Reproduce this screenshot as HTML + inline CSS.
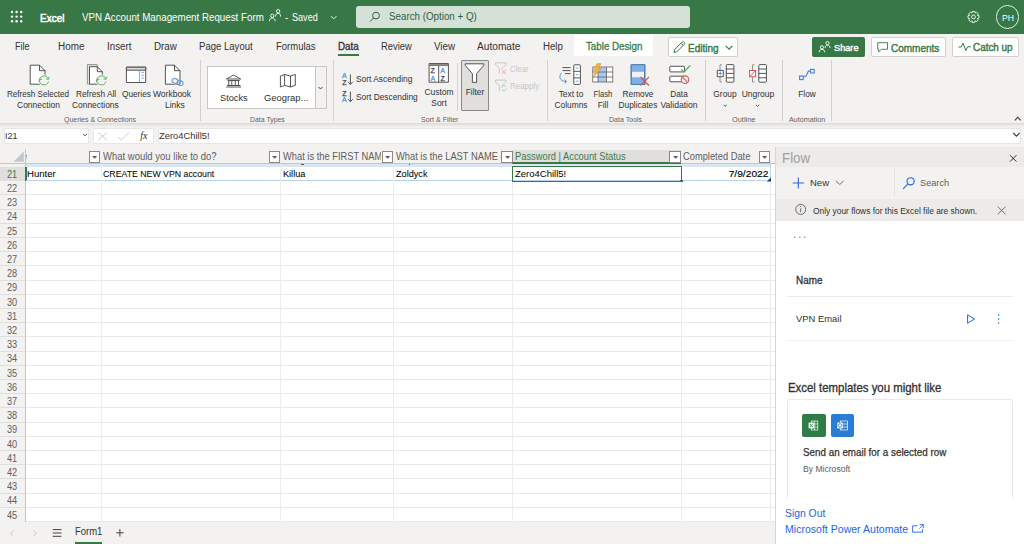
<!DOCTYPE html>
<html><head><meta charset="utf-8">
<style>
*{box-sizing:border-box;margin:0;padding:0}
html,body{width:1024px;height:544px;overflow:hidden;background:#fff;font-family:"Liberation Sans",sans-serif;color:#323130}
.a{position:absolute}
.t{position:absolute;white-space:nowrap;line-height:0}
.c{transform:translateX(-50%)}
svg{position:absolute;overflow:visible}
</style></head><body>
<!-- title bar -->
<div class="a" style="left:0;top:0;width:1024px;height:34px;background:#377846"></div>
<!-- tab bar + ribbon -->
<div class="a" style="left:0;top:34px;width:1024px;height:90px;background:#f3f2f1"></div>
<!-- formula bar -->
<div class="a" style="left:0;top:124px;width:1024px;height:25px;background:#f3f2f1"></div>
<!-- grid -->
<div class="a" id="grid" style="left:0;top:149px;width:776px;height:373px;background:#fff"></div>
<!-- sheet tabs -->
<div class="a" style="left:0;top:522px;width:776px;height:22px;background:#f3f2f1"></div>
<!-- TITLE BAR CONTENT -->
<svg style="left:0;top:0" width="40" height="34">
<g fill="#fff"><circle cx="12" cy="12" r="1.2"/><circle cx="16.6" cy="12" r="1.2"/><circle cx="21.2" cy="12" r="1.2"/>
<circle cx="12" cy="16.6" r="1.2"/><circle cx="16.6" cy="16.6" r="1.2"/><circle cx="21.2" cy="16.6" r="1.2"/>
<circle cx="12" cy="21.2" r="1.2"/><circle cx="16.6" cy="21.2" r="1.2"/><circle cx="21.2" cy="21.2" r="1.2"/></g></svg>
<div class="t" style="left:40.4px;top:17.6px;font-size:10.9px;color:#fff;-webkit-text-stroke:0.5px #fff;transform-origin:0 0;transform:scaleX(0.92)">Excel</div>
<div class="t" style="left:82px;top:17.6px;font-size:10.26px;color:#fff;transform-origin:0 0;transform:scaleX(0.9524)">VPN Account Management Request Form</div>
<svg style="left:0;top:0" width="300" height="34"><g fill="none" stroke="#fff" stroke-width="0.9"><circle cx="272.3" cy="15.8" r="1.7"/><path d="M269.4 21.2 C269.4 19 270.6 18 272.3 18 C274 18 275.2 19 275.2 21.2"/><circle cx="278.1" cy="11.2" r="1.7"/><path d="M275.6 16.6 C275.6 14.4 276.6 13.4 278.1 13.4 C279.6 13.4 280.7 14.4 280.7 16.6"/></g></svg>
<div class="t" style="left:284.5px;top:17.6px;font-size:10.26px;color:#fff;transform-origin:0 0;transform:scaleX(0.9524)">-</div>
<div class="t" style="left:291.5px;top:17.6px;font-size:10.24px;color:#fff;transform-origin:0 0;transform:scaleX(0.8886)">Saved</div>
<svg style="left:330px;top:15px" width="8" height="6"><path d="M1 1.2 L3.7 3.9 L6.4 1.2" fill="none" stroke="#fff" stroke-width="0.9"/></svg>
<div class="a" style="left:356.4px;top:6.1px;width:333.2px;height:22.1px;background:#d5e1d7;border-radius:3px"></div>
<svg style="left:369px;top:11px" width="12" height="12"><g fill="none" stroke="#2f5f3c" stroke-width="1"><circle cx="7" cy="4.6" r="3.4"/><path d="M4.6 7 L1 10.6"/></g></svg>
<div class="t" style="left:388.5px;top:17.3px;font-size:10.28px;color:#2f5f3c;transform-origin:0 0;transform:scaleX(0.9524)">Search (Option + Q)</div>
<svg style="left:0;top:0" width="1024" height="34"><g fill="none" stroke="#fff" stroke-width="0.9" stroke-linejoin="round"><circle cx="973.5" cy="16.9" r="1.9"/><path d="M978.97 15.68 L978.97 18.12 L977.38 18.51 L977.38 18.51 L978.23 19.90 L976.50 21.63 L975.11 20.78 L975.11 20.78 L974.72 22.37 L972.28 22.37 L971.89 20.78 L971.89 20.78 L970.50 21.63 L968.77 19.90 L969.62 18.51 L969.62 18.51 L968.03 18.12 L968.03 15.68 L969.62 15.29 L969.62 15.29 L968.77 13.90 L970.50 12.17 L971.89 13.02 L971.89 13.02 L972.28 11.43 L974.72 11.43 L975.11 13.02 L975.11 13.02 L976.50 12.17 L978.23 13.90 L977.38 15.29 L977.38 15.29 Z"/></g></svg>
<div class="a" style="left:995.9px;top:5.3px;width:23.3px;height:23.3px;border:0.9px solid #e8efe9;border-radius:50%"></div>
<div class="t" style="left:1001.9px;top:17.5px;font-size:9.4px;color:#fff;transform-origin:0 0;transform:scaleX(0.92)">PH</div>
<!-- TABS -->
<div class="t" style="left:15.4px;top:46.7px;font-size:10.24px;transform-origin:0 0;transform:scaleX(0.8849)">File</div>
<div class="t" style="left:58px;top:46.7px;font-size:10.24px;transform-origin:0 0;transform:scaleX(0.9666)">Home</div>
<div class="t" style="left:106.6px;top:46.7px;font-size:10.24px;transform-origin:0 0;transform:scaleX(0.9528)">Insert</div>
<div class="t" style="left:153.8px;top:46.7px;font-size:10.24px;transform-origin:0 0;transform:scaleX(0.9584)">Draw</div>
<div class="t" style="left:199.2px;top:46.7px;font-size:10.24px;transform-origin:0 0;transform:scaleX(0.9339)">Page Layout</div>
<div class="t" style="left:275.5px;top:46.7px;font-size:10.24px;transform-origin:0 0;transform:scaleX(0.9280)">Formulas</div>
<div class="t" style="left:338px;top:46.7px;font-size:10.34px;-webkit-text-stroke:0.3px #323130;transform-origin:0 0;transform:scaleX(0.9524)">Data</div>
<div class="a" style="left:338px;top:54px;width:21px;height:2px;background:#377846"></div>
<div class="t" style="left:380.6px;top:46.7px;font-size:10.24px;transform-origin:0 0;transform:scaleX(0.9144)">Review</div>
<div class="t" style="left:433.7px;top:46.7px;font-size:10.24px;transform-origin:0 0;transform:scaleX(0.9541)">View</div>
<div class="t" style="left:477px;top:46.7px;font-size:10.24px;transform-origin:0 0;transform:scaleX(0.9925)">Automate</div>
<div class="t" style="left:543.2px;top:46.7px;font-size:10.24px;transform-origin:0 0;transform:scaleX(0.9450)">Help</div>
<div class="a" style="left:574.4px;top:34.4px;width:79px;height:21.6px;background:#fff"></div>
<div class="t" style="left:585.8px;top:46.7px;font-size:10.24px;color:#3a7d4b;-webkit-text-stroke:0.3px #3a7d4b;transform-origin:0 0;transform:scaleX(0.9524)">Table Design</div>
<!-- Editing -->
<div class="a" style="left:668px;top:37.3px;width:69.7px;height:19.6px;background:#fff;border:1px solid #d2d0ce;border-radius:2px"></div>
<svg style="left:672px;top:40px" width="14" height="14"><g fill="none" stroke="#377846" stroke-width="1"><path d="M2 12.5 L2.6 9.6 L10 2.2 C10.6 1.6 11.6 1.6 12.2 2.2 C12.8 2.8 12.8 3.8 12.2 4.4 L4.8 11.8 Z M9 3.2 L11.2 5.4"/></g></svg>
<div class="t" style="left:688.4px;top:47.6px;font-size:10.50px;color:#377846;-webkit-text-stroke:0.4px #377846;transform-origin:0 0;transform:scaleX(0.9524)">Editing</div>
<svg style="left:724.5px;top:44.6px" width="9" height="6"><path d="M0.8 0.9 L4.1 4.2 L7.4 0.9" fill="none" stroke="#377846" stroke-width="1.1"/></svg>
<!-- Share -->
<div class="a" style="left:812.2px;top:37px;width:52.9px;height:19.9px;background:#377846;border-radius:2px"></div>
<svg style="left:0;top:0" width="1024" height="60"><g fill="none" stroke="#fff" stroke-width="0.9"><circle cx="821.9" cy="47.3" r="1.6"/><path d="M819.1 52.3 C819.1 50.3 820.3 49.4 821.9 49.4 C823.5 49.4 824.7 50.3 824.7 52.3"/><circle cx="827.5" cy="43.1" r="1.6"/><path d="M825.1 48.1 C825.1 46.1 826.1 45.2 827.5 45.2 C828.9 45.2 830 46.1 830 48.1"/></g></svg>
<div class="t" style="left:833.5px;top:47.6px;font-size:9.66px;color:#fff;-webkit-text-stroke:0.4px #fff;transform-origin:0 0;transform:scaleX(0.9524)">Share</div>
<!-- Comments -->
<div class="a" style="left:870.8px;top:37.3px;width:75.7px;height:19.6px;background:#fff;border:1px solid #d2d0ce;border-radius:2px"></div>
<svg style="left:877px;top:42px" width="12" height="11"><path d="M0.7 0.7 H10.5 V7.3 H4.3 L1.6 9.8 V7.3 H0.7 Z" fill="none" stroke="#377846" stroke-width="0.9"/></svg>
<div class="t" style="left:891px;top:47.6px;font-size:10.50px;color:#377846;-webkit-text-stroke:0.4px #377846;transform-origin:0 0;transform:scaleX(0.9524)">Comments</div>
<!-- Catch up -->
<div class="a" style="left:952.2px;top:37.3px;width:67px;height:19.6px;background:#fff;border:1px solid #d2d0ce;border-radius:2px"></div>
<svg style="left:957.5px;top:42px" width="14" height="10"><path d="M0.5 5 L3.2 5 L5 1.2 L7.8 8.6 L9.6 4.8 L13 4.8" fill="none" stroke="#377846" stroke-width="1"/></svg>
<div class="t" style="left:972.8px;top:47.6px;font-size:10.40px;color:#377846;-webkit-text-stroke:0.4px #377846;transform-origin:0 0;transform:scaleX(0.9524)">Catch up</div>

<!-- RIBBON -->
<div class="a" style="left:0;top:123px;width:1024px;height:4px;background:linear-gradient(#dcdad8,#f3f2f1)"></div>
<!-- separators -->
<div class="a" style="left:200px;top:60px;width:1px;height:61px;background:#d2d0ce"></div>
<div class="a" style="left:333px;top:60px;width:1px;height:61px;background:#d2d0ce"></div>
<div class="a" style="left:546.5px;top:60px;width:1px;height:61px;background:#d2d0ce"></div>
<div class="a" style="left:457.3px;top:63px;width:1px;height:48px;background:#d2d0ce"></div>
<div class="a" style="left:705.3px;top:60px;width:1px;height:61px;background:#d2d0ce"></div>
<div class="a" style="left:782.2px;top:60px;width:1px;height:61px;background:#d2d0ce"></div>
<div class="a" style="left:831.4px;top:60px;width:1px;height:61px;background:#d2d0ce"></div>
<!-- labels -->
<div class="t" style="left:7.3px;top:94px;font-size:8.51px;transform-origin:0 0;transform:scaleX(0.9524)">Refresh Selected</div>
<div class="t" style="left:16.6px;top:105px;font-size:8.93px;transform-origin:0 0;transform:scaleX(0.9524)">Connection</div>
<div class="t" style="left:75.7px;top:94px;font-size:8.72px;transform-origin:0 0;transform:scaleX(0.9524)">Refresh All</div>
<div class="t" style="left:71.7px;top:105px;font-size:8.82px;transform-origin:0 0;transform:scaleX(0.9524)">Connections</div>
<div class="t" style="left:121.5px;top:94px;font-size:8.66px;transform-origin:0 0;transform:scaleX(0.9524)">Queries</div>
<div class="t" style="left:153.4px;top:94px;font-size:8.93px;transform-origin:0 0;transform:scaleX(0.9524)">Workbook</div>
<div class="t" style="left:165px;top:105px;font-size:8.93px;transform-origin:0 0;transform:scaleX(0.9524)">Links</div>
<div class="t" style="left:64px;top:119.8px;font-size:7.35px;color:#605e5c;transform-origin:0 0;transform:scaleX(0.9524)">Queries &amp; Connections</div>
<div class="a" style="left:206.5px;top:65.6px;width:120.3px;height:43.6px;background:#fff;border:1px solid #c8c6c4"></div>
<div class="a" style="left:314.8px;top:66.6px;width:11px;height:41.6px;background:#f3f2f1;border-left:1px solid #c8c6c4"></div>
<svg style="left:317px;top:86px" width="8" height="5"><path d="M1.5 1 L3.5 3 L5.5 1" fill="none" stroke="#323130" stroke-width="0.9"/></svg>
<div class="t" style="left:219.8px;top:97.6px;font-size:9.66px;transform-origin:0 0;transform:scaleX(0.9524)">Stocks</div>
<div class="t" style="left:264px;top:97.6px;font-size:9.87px;transform-origin:0 0;transform:scaleX(0.9524)">Geograp...</div>
<div class="t" style="left:249.7px;top:119.8px;font-size:7.25px;color:#605e5c;transform-origin:0 0;transform:scaleX(0.9524)">Data Types</div>
<div class="t" style="left:356.3px;top:79.3px;font-size:8.82px;transform-origin:0 0;transform:scaleX(0.9524)">Sort Ascending</div>
<div class="t" style="left:356.3px;top:96.6px;font-size:8.77px;transform-origin:0 0;transform:scaleX(0.9524)">Sort Descending</div>
<div class="t c" style="left:438.5px;top:91.6px;font-size:8.87px;transform-origin:50% 0;transform:translateX(-50%) scaleX(0.9524)">Custom</div>
<div class="t c" style="left:438.5px;top:102.8px;font-size:8.87px;transform-origin:50% 0;transform:translateX(-50%) scaleX(0.9524)">Sort</div>
<div class="a" style="left:460.8px;top:60px;width:28.5px;height:50.5px;background:#e1dfdd;border:1px solid #8a8886;border-radius:1px"></div>
<div class="t c" style="left:475.1px;top:91.6px;font-size:8.72px;transform-origin:50% 0;transform:translateX(-50%) scaleX(0.9524)">Filter</div>
<div class="t" style="left:509.7px;top:69.8px;font-size:8.19px;color:#c8c6c4;transform-origin:0 0;transform:scaleX(0.9524)">Clear</div>
<div class="t" style="left:509.7px;top:86px;font-size:8.35px;color:#c8c6c4;transform-origin:0 0;transform:scaleX(0.9524)">Reapply</div>
<div class="t" style="left:421px;top:119.8px;font-size:7.46px;color:#605e5c;transform-origin:0 0;transform:scaleX(0.9524)">Sort &amp; Filter</div>
<div class="t c" style="left:570.5px;top:93.9px;font-size:8.82px;transform-origin:50% 0;transform:translateX(-50%) scaleX(0.9524)">Text to</div>
<div class="t c" style="left:570.5px;top:104.8px;font-size:8.77px;transform-origin:50% 0;transform:translateX(-50%) scaleX(0.9524)">Columns</div>
<div class="t c" style="left:602.5px;top:93.9px;font-size:8.72px;transform-origin:50% 0;transform:translateX(-50%) scaleX(0.88)">Flash</div>
<div class="t c" style="left:602.7px;top:104.8px;font-size:8.72px;transform-origin:50% 0;transform:translateX(-50%) scaleX(0.9524)">Fill</div>
<div class="t c" style="left:637.8px;top:93.9px;font-size:8.72px;transform-origin:50% 0;transform:translateX(-50%) scaleX(0.9524)">Remove</div>
<div class="t c" style="left:637.8px;top:104.8px;font-size:8.72px;transform-origin:50% 0;transform:translateX(-50%) scaleX(0.9524)">Duplicates</div>
<div class="t c" style="left:679px;top:93.9px;font-size:8.72px;transform-origin:50% 0;transform:translateX(-50%) scaleX(0.9524)">Data</div>
<div class="t c" style="left:679.2px;top:104.8px;font-size:9.03px;transform-origin:50% 0;transform:translateX(-50%) scaleX(0.9524)">Validation</div>
<div class="t" style="left:609.4px;top:119.8px;font-size:7.40px;color:#605e5c;transform-origin:0 0;transform:scaleX(0.9524)">Data Tools</div>
<div class="t c" style="left:725.2px;top:94.2px;font-size:8.82px;transform-origin:50% 0;transform:translateX(-50%) scaleX(0.9524)">Group</div>
<div class="t c" style="left:758px;top:94.2px;font-size:8.93px;transform-origin:50% 0;transform:translateX(-50%) scaleX(0.9524)">Ungroup</div>
<div class="t" style="left:731.9px;top:119.8px;font-size:7.77px;color:#605e5c;transform-origin:0 0;transform:scaleX(0.9524)">Outline</div>
<div class="t c" style="left:806.6px;top:94px;font-size:8.77px;transform-origin:50% 0;transform:translateX(-50%) scaleX(0.9524)">Flow</div>
<div class="t" style="left:788.5px;top:119.8px;font-size:7.56px;color:#605e5c;transform-origin:0 0;transform:scaleX(0.9524)">Automation</div>
<svg style="left:0;top:0" width="1024" height="130">
<g fill="none" stroke="#424242" stroke-width="0.9" stroke-linejoin="round">
<!-- refresh selected doc -->
<path d="M30.2 65.2 H39.5 L45 70.7 V84.2 H30.2 Z M39.5 65.2 V70.7 H45" fill="#fff"/>
<!-- refresh all docs -->
<path d="M87.4 84 V64.6 H97.2 V66.5 M87.4 84 H89.3" fill="#e6e4e2" stroke="#8a8886"/>
<path d="M89.5 66.7 H97.3 L102.3 71.7 V84.2 H89.5 Z M97.3 66.7 V71.7 H102.3" fill="#fff"/>
<!-- queries -->
<rect x="126.4" y="67.2" width="19.3" height="15.3" fill="#fff"/>
<rect x="126.4" y="67.2" width="19.3" height="3" fill="#dcdad8"/>
<!-- workbook links doc -->
<path d="M165.4 65.2 H174.5 L180 70.7 V84.2 H165.4 Z M174.5 65.2 V70.7 H180" fill="#fff"/>
<!-- stocks bank -->
<path d="M226.5 79 L233.6 75 L240.7 79 Z M227.5 80.5 H239.7 M226.3 87 H241 M228.8 81 V86 M231.8 81 V86 M235.3 81 V86 M238.4 81 V86 M227 85.5 H240.5"/>
<!-- map -->
<path d="M280.4 76 L284.6 74.5 L290.5 76 L295.3 74.5 V85.4 L290.5 87 L284.6 85.4 L280.4 87 Z M284.6 74.5 V85.4 M290.5 76 V87"/>
<!-- sort asc/desc arrows -->
<path d="M350.4 74.4 V84.3 M348 81.8 L350.4 84.4 L352.8 81.8"/>
<path d="M350.4 91.7 V101.6 M348 99.1 L350.4 101.7 L352.8 99.1"/>
<!-- custom sort -->
<rect x="429.1" y="63.5" width="19.3" height="18.7" fill="#fff"/>
<path d="M429.1 65.6 H448.4 M438.7 65.6 V82.2" />
<!-- funnel -->
<path d="M465.3 63.8 H483.8 V65.4 L476.6 73.8 V82.4 H472.4 V73.8 L465.3 65.4 Z" fill="#fff"/>
<!-- text to columns -->
<path d="M562.5 67.6 H570.5 M562.5 70.6 H570.5 M565 73.6 H570.5"/>
<rect x="573.8" y="64.8" width="6.6" height="19.6" rx="0.8" fill="#fff"/>
<path d="M573.8 71.3 H580.4 M573.8 77.9 H580.4"/>
<!-- flash fill table -->
<rect x="592.8" y="67" width="20" height="15" fill="#fff" stroke="none"/>
<!-- remove duplicates -->
<rect x="631.2" y="64.8" width="13.6" height="19.6"/>
<!-- data validation -->
<rect x="669.8" y="66.3" width="14.8" height="5.6" rx="0.8" fill="#fff"/>
<rect x="669.8" y="76.2" width="14.8" height="5.6" rx="0.8" fill="#fff"/>
<!-- group -->
<rect x="726.3" y="64.6" width="7.6" height="17.6" rx="0.8" fill="#fff"/>
<path d="M726.3 69 H733.9 M726.3 73.4 H733.9 M726.3 77.8 H733.9"/>
<path d="M722 64.8 H720 V82 H722" stroke="#8a8886"/>
<rect x="717.3" y="70.4" width="6" height="6.3" fill="#fff"/>
<!-- ungroup -->
<rect x="758.8" y="64.6" width="7.6" height="17.6" rx="0.8" fill="#fff"/>
<path d="M758.8 69 H766.4 M758.8 73.4 H766.4 M758.8 77.8 H766.4"/>
<path d="M754.5 64.8 H752.5 V70.2 M752.5 76.9 V82 H754.5" stroke="#8a8886"/>
</g>
<!-- gallery chevron in group/ungroup -->
<g fill="none" stroke="#424242" stroke-width="0.9"><path d="M723.6 104.8 L725.2 106.4 L726.8 104.8 M755.9 104.8 L757.5 106.4 L759.1 104.8"/></g>
<!-- green refresh circles -->
<g fill="none" stroke="#5cb85c" stroke-width="1">
<circle cx="44.1" cy="80.4" r="5.8" fill="#f3f2f1" stroke="none"/><path d="M39.66 81.59 A4.6 4.6 0 0 1 48.54 79.21 M48.54 81.59 A4.6 4.6 0 0 1 39.66 79.21 M46.14 78.91 L48.54 79.21 L49.04 76.81 M42.06 79.51 L39.66 79.21 L39.16 81.61"/>
<circle cx="101.5" cy="80.4" r="5.8" fill="#f3f2f1" stroke="none"/><path d="M97.06 81.59 A4.6 4.6 0 0 1 105.94 79.21 M105.94 81.59 A4.6 4.6 0 0 1 97.06 79.21 M103.54 78.91 L105.94 79.21 L106.44 76.81 M99.46 79.51 L97.06 79.21 L96.56 81.61"/>
</g>
<!-- queries blue pane -->
<path d="M139.4 70.6 V82.3 M141.2 72.4 H144.2 M141.2 75.2 H144.2 M141.2 78 H144.2" stroke="#5a9be0" stroke-width="0.8"/>
<!-- workbook links -->
<g fill="none" stroke="#5a9be0" stroke-width="1" transform="rotate(15 177.6 82)"><ellipse cx="175" cy="81.6" rx="3.2" ry="2.3" fill="#f3f2f1" stroke="#f3f2f1" stroke-width="2"/><ellipse cx="175" cy="81.6" rx="3.2" ry="2.3"/><ellipse cx="180.2" cy="82.4" rx="3.2" ry="2.3"/></g>
<!-- sort letters -->
<g font-family="Liberation Sans" font-size="7.1" stroke-width="0.25">
<text x="342" y="78.2" fill="#4a90d9" stroke="#4a90d9">A</text><text x="342.2" y="84.7" fill="#424242" stroke="#424242">Z</text>
<text x="342.2" y="95.8" fill="#424242" stroke="#424242">Z</text><text x="342" y="102.1" fill="#4a90d9" stroke="#4a90d9">A</text>
<text x="430.6" y="73.4" fill="#424242" stroke="#424242">Z</text><text x="430.4" y="81" fill="#4a90d9" stroke="#4a90d9">A</text>
<text x="440.2" y="73.4" fill="#4a90d9" stroke="#4a90d9">A</text><text x="440.4" y="81" fill="#424242" stroke="#424242">Z</text>
</g>
<rect x="429.5" y="63.9" width="18.5" height="1.9" fill="#8a8886"/>
<!-- clear / reapply -->
<g fill="none" stroke="#c4c2c0" stroke-width="0.9" stroke-linejoin="round"><path d="M495.4 62.8 H506 V64.4 L501.4 69 M495.4 62.8 V64.4 L499.4 68.6 V73.6"/><path d="M495.4 80.1 H506 V81.7 L501.4 86.3 M495.4 80.1 V81.7 L499.4 85.9 V90.9"/></g>
<path d="M501.6 69.6 L506 74 M506 69.6 L501.6 74" stroke="#eba3a3" stroke-width="0.9"/>
<path d="M501.6 87.6 A2.4 2.4 0 0 1 506 86.6 M506.2 88.6 A2.4 2.4 0 0 1 501.8 89.6" fill="none" stroke="#9fd09f" stroke-width="0.9"/>
<!-- text to columns arrow -->
<path d="M561.4 73.2 C558.5 76 559.5 81.5 566.5 81.6 M564.6 79.6 L566.7 81.6 L564.6 83.6" fill="none" stroke="#4a90d9" stroke-width="1"/>
<path d="M575.7 68 H578.5 M575.7 74.6 H578.5 M575.7 81.2 H578.5" stroke="#4a90d9" stroke-width="0.8"/>
<!-- flash fill -->
<rect x="598" y="67.4" width="8.5" height="14.4" fill="#a9c8ee"/>
<g fill="none" stroke="#605e5c" stroke-width="0.8"><path d="M592.8 72 H612.8 M592.8 77 H612.8 M598 67 V82 M606.5 67 V82"/><rect x="592.8" y="67" width="20" height="15"/></g>
<path d="M597 63.6 H601 L598.6 68.4 H601.2 L593.4 77 L595.8 70.6 H593.2 Z" fill="#f2b04b" stroke="#d98f1f" stroke-width="0.5"/>
<!-- remove duplicates -->
<rect x="631.2" y="64.8" width="13.6" height="7" fill="#7eb0e6"/>
<rect x="631.2" y="77.3" width="13.6" height="7" fill="#7eb0e6"/>
<rect x="631.2" y="64.8" width="13.6" height="19.6" fill="none" stroke="#4a7fbf" stroke-width="0.9"/>
<path d="M640.5 77 L649 85.5 M649 77 L640.5 85.5" stroke="#e05252" stroke-width="1.1"/>
<!-- data validation -->
<path d="M681.3 69.5 L684 72 L690.3 65.5" fill="none" stroke="#4caf50" stroke-width="1.1"/>
<circle cx="685" cy="79.7" r="3.8" fill="#f3f2f1" stroke="#e05252" stroke-width="1.1"/>
<path d="M682.4 77.1 L687.6 82.3" stroke="#e05252" stroke-width="1.1"/>
<!-- group plus / ungroup red -->
<path d="M720.3 71.5 V75.6 M718.3 73.5 H722.3" stroke="#4a90d9" stroke-width="0.9"/>
<rect x="749.6" y="70.5" width="6" height="6.3" fill="#fff" stroke="#e05252" stroke-width="1"/>
<path d="M750 76.4 L755.2 71" stroke="#e05252" stroke-width="1"/>
<!-- flow icon -->
<g fill="none" stroke="#4a7fe0" stroke-width="1.1"><rect x="799.6" y="76" width="3.6" height="3.6"/><rect x="810.6" y="69.4" width="3.6" height="3.6"/><path d="M803.2 77 L806 76 L808.5 71 L810.6 71.5"/></g>
<!-- collapse ribbon -->
<path d="M1014.8 120.3 L1017.8 117.3 L1020.8 120.3" fill="none" stroke="#424242" stroke-width="1.15"/>
</svg>

<!-- FORMULA BAR -->
<div class="a" style="left:3.6px;top:127.7px;width:85.8px;height:16.2px;background:#fff;border:1px solid #e8e6e4;border-radius:1px"></div>
<div class="t" style="left:5.3px;top:136.2px;font-size:9.35px;transform-origin:0 0;transform:scaleX(0.9524)">I21</div>
<svg style="left:82px;top:133px" width="8" height="5"><path d="M1.2 1 L3 2.8 L4.8 1" fill="none" stroke="#323130" stroke-width="0.9"/></svg>
<div class="a" style="left:92.8px;top:127.7px;width:61.4px;height:16.2px;background:#fff;border:1px solid #e8e6e4;border-radius:1px"></div>
<svg style="left:0;top:0" width="200" height="150"><path d="M98.2 132.4 L107 140.2 M107 132.4 L98.2 140.2 M117.8 136.8 L121.2 140 L129 132.4" fill="none" stroke="#c8c6c4" stroke-width="0.9"/></svg>
<div class="t" style="left:140.2px;top:135.8px;font-size:10px;font-family:'Liberation Serif',serif;font-style:italic;color:#323130">fx</div>
<div class="a" style="left:157.8px;top:127.7px;width:863.2px;height:16.2px;background:#fff;border:1px solid #e8e6e4;border-radius:1px"></div>
<div class="t" style="left:159.4px;top:135.8px;font-size:9.87px;transform-origin:0 0;transform:scaleX(0.9524)">Zero4Chill5!</div>
<svg style="left:1012px;top:131px" width="10" height="7"><path d="M1.2 2 L4.4 5.2 L7.6 2" fill="none" stroke="#424242" stroke-width="1.2"/></svg>
<!-- GRID -->
<div class="a" style="left:0;top:147px;width:776px;height:17px;background:#f3f2f1"></div>
<div class="a" style="left:0;top:163px;width:776px;height:1px;background:#c8c6c4"></div>
<div class="a" style="left:0;top:164px;width:25.3px;height:358px;background:#f3f2f1"></div>
<div class="a" style="left:25.2px;top:149px;width:1px;height:373px;background:#c8c6c4"></div>
<svg style="left:0;top:0" width="30" height="170"><path d="M23.8 151.4 V161.7 H13.5 Z" fill="#c8c6c4"/></svg>
<div class="a" style="left:26px;top:164px;width:745px;height:2.8px;background:#dbe6f3"></div>
<div class="a" style="left:0;top:166.6px;width:25.2px;height:14.4px;background:#e1dfdd"></div>
<div class="a" style="left:24.8px;top:166.6px;width:1.8px;height:14.4px;background:#377846"></div>
<div class="a" style="left:26px;top:180.10px;width:745px;height:0.9px;background:#b9d1ec"></div>
<div class="a" style="left:0;top:180.10px;width:25px;height:0.9px;background:#e1dfdd"></div>
<div class="t" style="left:7.1px;top:174.80px;font-size:10.2px;color:#377846;transform-origin:0 0;transform:scaleX(0.9)">21</div>
<div class="a" style="left:26px;top:194.30px;width:750px;height:0.9px;background:#e9e9e9"></div>
<div class="a" style="left:0;top:194.30px;width:25px;height:0.9px;background:#e1dfdd"></div>
<div class="t" style="left:7.1px;top:189.00px;font-size:10.2px;color:#605e5c;transform-origin:0 0;transform:scaleX(0.9)">22</div>
<div class="a" style="left:26px;top:208.50px;width:750px;height:0.9px;background:#e9e9e9"></div>
<div class="a" style="left:0;top:208.50px;width:25px;height:0.9px;background:#e1dfdd"></div>
<div class="t" style="left:7.1px;top:203.20px;font-size:10.2px;color:#605e5c;transform-origin:0 0;transform:scaleX(0.9)">23</div>
<div class="a" style="left:26px;top:222.70px;width:750px;height:0.9px;background:#e9e9e9"></div>
<div class="a" style="left:0;top:222.70px;width:25px;height:0.9px;background:#e1dfdd"></div>
<div class="t" style="left:7.1px;top:217.40px;font-size:10.2px;color:#605e5c;transform-origin:0 0;transform:scaleX(0.9)">24</div>
<div class="a" style="left:26px;top:236.90px;width:750px;height:0.9px;background:#e9e9e9"></div>
<div class="a" style="left:0;top:236.90px;width:25px;height:0.9px;background:#e1dfdd"></div>
<div class="t" style="left:7.1px;top:231.60px;font-size:10.2px;color:#605e5c;transform-origin:0 0;transform:scaleX(0.9)">25</div>
<div class="a" style="left:26px;top:251.10px;width:750px;height:0.9px;background:#e9e9e9"></div>
<div class="a" style="left:0;top:251.10px;width:25px;height:0.9px;background:#e1dfdd"></div>
<div class="t" style="left:7.1px;top:245.80px;font-size:10.2px;color:#605e5c;transform-origin:0 0;transform:scaleX(0.9)">26</div>
<div class="a" style="left:26px;top:265.30px;width:750px;height:0.9px;background:#e9e9e9"></div>
<div class="a" style="left:0;top:265.30px;width:25px;height:0.9px;background:#e1dfdd"></div>
<div class="t" style="left:7.1px;top:260.00px;font-size:10.2px;color:#605e5c;transform-origin:0 0;transform:scaleX(0.9)">27</div>
<div class="a" style="left:26px;top:279.50px;width:750px;height:0.9px;background:#e9e9e9"></div>
<div class="a" style="left:0;top:279.50px;width:25px;height:0.9px;background:#e1dfdd"></div>
<div class="t" style="left:7.1px;top:274.20px;font-size:10.2px;color:#605e5c;transform-origin:0 0;transform:scaleX(0.9)">28</div>
<div class="a" style="left:26px;top:293.70px;width:750px;height:0.9px;background:#e9e9e9"></div>
<div class="a" style="left:0;top:293.70px;width:25px;height:0.9px;background:#e1dfdd"></div>
<div class="t" style="left:7.1px;top:288.40px;font-size:10.2px;color:#605e5c;transform-origin:0 0;transform:scaleX(0.9)">29</div>
<div class="a" style="left:26px;top:307.90px;width:750px;height:0.9px;background:#e9e9e9"></div>
<div class="a" style="left:0;top:307.90px;width:25px;height:0.9px;background:#e1dfdd"></div>
<div class="t" style="left:7.1px;top:302.60px;font-size:10.2px;color:#605e5c;transform-origin:0 0;transform:scaleX(0.9)">30</div>
<div class="a" style="left:26px;top:322.10px;width:750px;height:0.9px;background:#e9e9e9"></div>
<div class="a" style="left:0;top:322.10px;width:25px;height:0.9px;background:#e1dfdd"></div>
<div class="t" style="left:7.1px;top:316.80px;font-size:10.2px;color:#605e5c;transform-origin:0 0;transform:scaleX(0.9)">31</div>
<div class="a" style="left:26px;top:336.30px;width:750px;height:0.9px;background:#e9e9e9"></div>
<div class="a" style="left:0;top:336.30px;width:25px;height:0.9px;background:#e1dfdd"></div>
<div class="t" style="left:7.1px;top:331.00px;font-size:10.2px;color:#605e5c;transform-origin:0 0;transform:scaleX(0.9)">32</div>
<div class="a" style="left:26px;top:350.50px;width:750px;height:0.9px;background:#e9e9e9"></div>
<div class="a" style="left:0;top:350.50px;width:25px;height:0.9px;background:#e1dfdd"></div>
<div class="t" style="left:7.1px;top:345.20px;font-size:10.2px;color:#605e5c;transform-origin:0 0;transform:scaleX(0.9)">33</div>
<div class="a" style="left:26px;top:364.70px;width:750px;height:0.9px;background:#e9e9e9"></div>
<div class="a" style="left:0;top:364.70px;width:25px;height:0.9px;background:#e1dfdd"></div>
<div class="t" style="left:7.1px;top:359.40px;font-size:10.2px;color:#605e5c;transform-origin:0 0;transform:scaleX(0.9)">34</div>
<div class="a" style="left:26px;top:378.90px;width:750px;height:0.9px;background:#e9e9e9"></div>
<div class="a" style="left:0;top:378.90px;width:25px;height:0.9px;background:#e1dfdd"></div>
<div class="t" style="left:7.1px;top:373.60px;font-size:10.2px;color:#605e5c;transform-origin:0 0;transform:scaleX(0.9)">35</div>
<div class="a" style="left:26px;top:393.10px;width:750px;height:0.9px;background:#e9e9e9"></div>
<div class="a" style="left:0;top:393.10px;width:25px;height:0.9px;background:#e1dfdd"></div>
<div class="t" style="left:7.1px;top:387.80px;font-size:10.2px;color:#605e5c;transform-origin:0 0;transform:scaleX(0.9)">36</div>
<div class="a" style="left:26px;top:407.30px;width:750px;height:0.9px;background:#e9e9e9"></div>
<div class="a" style="left:0;top:407.30px;width:25px;height:0.9px;background:#e1dfdd"></div>
<div class="t" style="left:7.1px;top:402.00px;font-size:10.2px;color:#605e5c;transform-origin:0 0;transform:scaleX(0.9)">37</div>
<div class="a" style="left:26px;top:421.50px;width:750px;height:0.9px;background:#e9e9e9"></div>
<div class="a" style="left:0;top:421.50px;width:25px;height:0.9px;background:#e1dfdd"></div>
<div class="t" style="left:7.1px;top:416.20px;font-size:10.2px;color:#605e5c;transform-origin:0 0;transform:scaleX(0.9)">38</div>
<div class="a" style="left:26px;top:435.70px;width:750px;height:0.9px;background:#e9e9e9"></div>
<div class="a" style="left:0;top:435.70px;width:25px;height:0.9px;background:#e1dfdd"></div>
<div class="t" style="left:7.1px;top:430.40px;font-size:10.2px;color:#605e5c;transform-origin:0 0;transform:scaleX(0.9)">39</div>
<div class="a" style="left:26px;top:449.90px;width:750px;height:0.9px;background:#e9e9e9"></div>
<div class="a" style="left:0;top:449.90px;width:25px;height:0.9px;background:#e1dfdd"></div>
<div class="t" style="left:7.1px;top:444.60px;font-size:10.2px;color:#605e5c;transform-origin:0 0;transform:scaleX(0.9)">40</div>
<div class="a" style="left:26px;top:464.10px;width:750px;height:0.9px;background:#e9e9e9"></div>
<div class="a" style="left:0;top:464.10px;width:25px;height:0.9px;background:#e1dfdd"></div>
<div class="t" style="left:7.1px;top:458.80px;font-size:10.2px;color:#605e5c;transform-origin:0 0;transform:scaleX(0.9)">41</div>
<div class="a" style="left:26px;top:478.30px;width:750px;height:0.9px;background:#e9e9e9"></div>
<div class="a" style="left:0;top:478.30px;width:25px;height:0.9px;background:#e1dfdd"></div>
<div class="t" style="left:7.1px;top:473.00px;font-size:10.2px;color:#605e5c;transform-origin:0 0;transform:scaleX(0.9)">42</div>
<div class="a" style="left:26px;top:492.50px;width:750px;height:0.9px;background:#e9e9e9"></div>
<div class="a" style="left:0;top:492.50px;width:25px;height:0.9px;background:#e1dfdd"></div>
<div class="t" style="left:7.1px;top:487.20px;font-size:10.2px;color:#605e5c;transform-origin:0 0;transform:scaleX(0.9)">43</div>
<div class="a" style="left:26px;top:506.70px;width:750px;height:0.9px;background:#e9e9e9"></div>
<div class="a" style="left:0;top:506.70px;width:25px;height:0.9px;background:#e1dfdd"></div>
<div class="t" style="left:7.1px;top:501.40px;font-size:10.2px;color:#605e5c;transform-origin:0 0;transform:scaleX(0.9)">44</div>
<div class="a" style="left:26px;top:520.90px;width:750px;height:0.9px;background:#e9e9e9"></div>
<div class="t" style="left:7.1px;top:515.60px;font-size:10.2px;color:#605e5c;transform-origin:0 0;transform:scaleX(0.9)">45</div>
<div class="a" style="left:101.05px;top:164px;width:0.9px;height:358px;background:#ededed"></div>
<div class="a" style="left:101.05px;top:149px;width:0.9px;height:14px;background:#f3f2f1"></div>
<div class="a" style="left:279.85px;top:164px;width:0.9px;height:358px;background:#ededed"></div>
<div class="a" style="left:279.85px;top:149px;width:0.9px;height:14px;background:#f3f2f1"></div>
<div class="a" style="left:393.15px;top:164px;width:0.9px;height:358px;background:#ededed"></div>
<div class="a" style="left:393.15px;top:149px;width:0.9px;height:14px;background:#f3f2f1"></div>
<div class="a" style="left:512.35px;top:164px;width:0.9px;height:358px;background:#ededed"></div>
<div class="a" style="left:512.35px;top:149px;width:0.9px;height:14px;background:#f3f2f1"></div>
<div class="a" style="left:681.05px;top:164px;width:0.9px;height:358px;background:#ededed"></div>
<div class="a" style="left:681.05px;top:149px;width:0.9px;height:14px;background:#f3f2f1"></div>
<div class="a" style="left:770.3px;top:164px;width:0.9px;height:17px;background:#b9d1ec"></div>
<div class="a" style="left:770.3px;top:181px;width:0.9px;height:341px;background:#e9e9e9"></div>
<div class="a" style="left:512.3px;top:149.5px;width:169.2px;height:13.5px;background:#e1dfdd"></div>
<div class="a" style="left:512.3px;top:162px;width:169.2px;height:1.6px;background:#377846"></div>
<div class="a" style="left:88.5px;top:151.1px;width:11.9px;height:11.9px;background:#fff;border:1px solid #8a8886"></div>
<svg style="left:91.80px;top:155.7px" width="6" height="4"><path d="M0 0 H5.3 L2.65 2.7 Z" fill="#605e5c"/></svg>
<div class="a" style="left:268.6px;top:151.1px;width:11.9px;height:11.9px;background:#fff;border:1px solid #8a8886"></div>
<svg style="left:271.90px;top:155.7px" width="6" height="4"><path d="M0 0 H5.3 L2.65 2.7 Z" fill="#605e5c"/></svg>
<div class="a" style="left:381.6px;top:151.1px;width:11.9px;height:11.9px;background:#fff;border:1px solid #8a8886"></div>
<svg style="left:384.90px;top:155.7px" width="6" height="4"><path d="M0 0 H5.3 L2.65 2.7 Z" fill="#605e5c"/></svg>
<div class="a" style="left:501.4px;top:151.1px;width:11.9px;height:11.9px;background:#fff;border:1px solid #8a8886"></div>
<svg style="left:504.70px;top:155.7px" width="6" height="4"><path d="M0 0 H5.3 L2.65 2.7 Z" fill="#605e5c"/></svg>
<div class="a" style="left:669.3px;top:151.1px;width:11.9px;height:11.9px;background:#fff;border:1px solid #8a8886"></div>
<svg style="left:672.60px;top:155.7px" width="6" height="4"><path d="M0 0 H5.3 L2.65 2.7 Z" fill="#605e5c"/></svg>
<div class="a" style="left:758.5px;top:151.1px;width:11.9px;height:11.9px;background:#fff;border:1px solid #8a8886"></div>
<svg style="left:761.80px;top:155.7px" width="6" height="4"><path d="M0 0 H5.3 L2.65 2.7 Z" fill="#605e5c"/></svg>
<div class="a" style="left:26px;top:150px;width:2px;height:12px;overflow:hidden"><div class="t" style="left:-3.6px;top:6.3px;font-size:9.77px;color:#605e5c;transform-origin:0 0;transform:scaleX(0.9524)">e</div></div>
<div class="a" style="left:103.1px;top:149px;width:165.2px;height:14px;overflow:hidden"><div class="t" style="left:0;top:7.5px;font-size:10.2px;color:#605e5c;transform-origin:0 0;transform:scaleX(0.933)">What would you like to do?</div></div>
<div class="a" style="left:282.7px;top:149px;width:98.7px;height:14px;overflow:hidden"><div class="t" style="left:0;top:7.5px;font-size:10.2px;color:#605e5c;transform-origin:0 0;transform:scaleX(0.915)">What is the FIRST NAME of</div></div>
<div class="a" style="left:395.7px;top:149px;width:105.5px;height:14px;overflow:hidden"><div class="t" style="left:0;top:7.5px;font-size:10.2px;color:#605e5c;transform-origin:0 0;transform:scaleX(0.915)">What is the LAST NAME of</div></div>
<div class="a" style="left:515.2px;top:149px;width:153.8px;height:14px;overflow:hidden"><div class="t" style="left:0;top:7.5px;font-size:10.2px;color:#3a7d4b;transform-origin:0 0;transform:scaleX(0.915)">Password | Account Status</div></div>
<div class="a" style="left:682.9px;top:149px;width:75.4px;height:14px;overflow:hidden"><div class="t" style="left:0;top:7.5px;font-size:10.2px;color:#605e5c;transform-origin:0 0;transform:scaleX(0.915)">Completed Date</div></div>
<div class="a" style="left:512.2px;top:165.8px;width:169.9px;height:15.8px;border:1.6px solid #377846"></div>
<div class="a" style="left:679.9px;top:179.6px;width:2.8px;height:2.8px;background:#377846"></div>
<div class="t" style="left:27px;top:174.2px;font-size:9.9px;color:#000;-webkit-text-stroke:0.05px #000;transform-origin:0 0;transform:scaleX(0.966)">Hunter</div>
<div class="t" style="left:102.9px;top:174.2px;font-size:9.9px;color:#000;-webkit-text-stroke:0.05px #000;transform-origin:0 0;transform:scaleX(0.886)">CREATE NEW VPN account</div>
<div class="t" style="left:282.6px;top:174.2px;font-size:9.9px;color:#000;-webkit-text-stroke:0.05px #000;transform-origin:0 0;transform:scaleX(0.925)">Killua</div>
<div class="t" style="left:395.5px;top:174.2px;font-size:9.9px;color:#000;-webkit-text-stroke:0.05px #000;transform-origin:0 0;transform:scaleX(0.926)">Zoldyck</div>
<div class="t" style="left:514.6px;top:174.2px;font-size:9.9px;color:#000;transform-origin:0 0;transform:scaleX(0.961)">Zero4Chill5!</div>
<div class="t" style="right:255.3px;top:174.2px;font-size:9.9px;color:#000;-webkit-text-stroke:0.15px #000;transform-origin:100% 0;transform:scaleX(1.035)">7/9/2022</div>
<svg style="left:766px;top:176.5px" width="6" height="5"><path d="M5 0.6 V4.4 H0.8 Z" fill="#1f3d6b"/></svg>
<div class="a" style="left:300.8px;top:163.6px;width:3px;height:1px;background:#555"></div>
<div class="a" style="left:409.2px;top:163.6px;width:1.2px;height:1px;background:#555"></div>
<!-- SHEET TABS -->
<div class="a" style="left:0;top:521.8px;width:776px;height:22.2px;background:#f3f2f1"></div>
<svg style="left:0;top:520" width="140" height="24"><g fill="none" stroke="#c8c6c4" stroke-width="0.9"><path d="M13.2 10.4 L10.6 13.4 L13.2 16.4 M33.6 10.4 L36.2 13.4 L33.6 16.4"/></g><path d="M52.7 9.6 H61.5 M52.7 13 H61.5 M52.7 16.3 H61.5" stroke="#424242" stroke-width="1"/><path d="M119.9 9.1 V16.5 M116.2 12.8 H123.6" stroke="#424242" stroke-width="1"/></svg>
<div class="t" style="left:74.7px;top:532.2px;font-size:10.4px;color:#323130;transform-origin:0 0;transform:scaleX(0.91)">Form1</div>
<div class="a" style="left:74.7px;top:542.3px;width:27.3px;height:1.7px;background:#377846"></div>
<!-- FLOW PANE -->
<div class="a" style="left:775.3px;top:147px;width:248.7px;height:397px;background:#fff;border-left:1px solid #d8d6d4"></div>
<div class="a" style="left:776.3px;top:147px;width:247.7px;height:19.8px;background:#edebe9"></div>
<div class="t" style="left:781.7px;top:158.4px;font-size:13.97px;color:#a19f9d;transform-origin:0 0;transform:scaleX(0.9524)">Flow</div>
<svg style="left:1008px;top:153px" width="10" height="10"><path d="M2 2.2 L8.4 8.6 M8.4 2.2 L2 8.6" fill="none" stroke="#323130" stroke-width="1"/></svg>
<div class="a" style="left:776.3px;top:166.8px;width:247.7px;height:31.8px;background:#f3f2f1"></div>
<svg style="left:790px;top:175px" width="60" height="16"><path d="M8.3 2.4 V13.6 M2.7 8 H13.9" fill="none" stroke="#2266e3" stroke-width="1.1"/><path d="M45.9 5.6 L49.8 9.5 L53.7 5.6" fill="none" stroke="#605e5c" stroke-width="0.9"/></svg>
<div class="t" style="left:810.4px;top:183.3px;font-size:9.97px;color:#323130;transform-origin:0 0;transform:scaleX(0.9524)">New</div>
<div class="a" style="left:893.5px;top:168px;width:0.9px;height:29px;background:#e6e4e2"></div>
<svg style="left:900px;top:175px" width="18" height="16"><g fill="none" stroke="#2266e3" stroke-width="1.1"><circle cx="10.6" cy="6.3" r="3.6"/><path d="M8 8.9 L3.1 13.8"/></g></svg>
<div class="t" style="left:920px;top:183.3px;font-size:9.66px;color:#605e5c;transform-origin:0 0;transform:scaleX(0.9524)">Search</div>
<div class="a" style="left:776.3px;top:198.6px;width:247.7px;height:22.3px;background:#edebe9"></div>
<svg style="left:793px;top:202px" width="16" height="16"><circle cx="7.7" cy="7.4" r="5" fill="none" stroke="#605e5c" stroke-width="0.9"/><path d="M7.7 6.3 V10.2" stroke="#605e5c" stroke-width="0.9"/><circle cx="7.7" cy="4.6" r="0.55" fill="#605e5c"/></svg>
<div class="t" style="left:812.9px;top:210.6px;font-size:8.82px;color:#323130;transform-origin:0 0;transform:scaleX(0.9524)">Only your flows for this Excel file are shown.</div>
<svg style="left:996px;top:205px" width="11" height="11"><path d="M1.8 1.6 L9.6 9.4 M9.6 1.6 L1.8 9.4" fill="none" stroke="#605e5c" stroke-width="0.9"/></svg>
<svg style="left:790px;top:232px" width="20" height="8"><g fill="#605e5c"><circle cx="4.8" cy="5.2" r="0.65"/><circle cx="9.8" cy="5.2" r="0.65"/><circle cx="14.8" cy="5.2" r="0.65"/></g></svg>
<div class="t" style="left:796px;top:280.8px;font-size:10.40px;color:#323130;-webkit-text-stroke:0.3px #323130;transform-origin:0 0;transform:scaleX(0.9524)">Name</div>
<div class="a" style="left:786.9px;top:296px;width:226.2px;height:0.9px;background:#edebe9"></div>
<div class="t" style="left:795.6px;top:319.2px;font-size:9.90px;color:#323130;transform-origin:0 0;transform:scaleX(0.9524)">VPN Email</div>
<svg style="left:964px;top:312px" width="40" height="14"><path d="M3.6 2.8 L10.6 7 L3.6 11.2 Z" fill="none" stroke="#2266e3" stroke-width="1"/><g fill="#2266e3"><circle cx="34.7" cy="3" r="0.75"/><circle cx="34.7" cy="7" r="0.75"/><circle cx="34.7" cy="11" r="0.75"/></g></svg>
<div class="a" style="left:786.9px;top:340.2px;width:226.2px;height:0.9px;background:#f3f2f1"></div>
<div class="t" style="left:787.6px;top:388.4px;font-size:11.97px;color:#323130;-webkit-text-stroke:0.3px #323130;transform-origin:0 0;transform:scaleX(0.9524)">Excel templates you might like</div>
<div class="a" style="left:787.3px;top:399.1px;width:225.4px;height:110px;background:#fff;border:1px solid #edebe9;border-radius:2px;box-shadow:0 0.5px 1px rgba(0,0,0,0.04)"></div>
<div class="a" style="left:802.4px;top:413.6px;width:23.3px;height:23px;background:#2e7d46;border-radius:2px"></div>
<div class="a" style="left:831.1px;top:413.6px;width:23.3px;height:23px;background:#2b7cd3;border-radius:2px"></div>
<svg style="left:802.4px;top:413.6px" width="53" height="23">
<g fill="none" stroke="#fff" stroke-width="0.7"><rect x="9.6" y="7" width="6.2" height="9"/><path d="M9.6 10 H15.8 M9.6 13 H15.8 M12.7 7 V16"/></g>
<rect x="6.6" y="8.6" width="5.4" height="5.8" fill="#fff"/><path d="M7.8 9.8 L10.8 13.2 M10.8 9.8 L7.8 13.2" stroke="#2e7d46" stroke-width="0.8"/>
<g fill="none" stroke="#fff" stroke-width="0.7"><rect x="38.3" y="7" width="7.2" height="9"/><path d="M38.3 10 H45.5 M38.3 13 H45.5"/></g>
<rect x="35.3" y="8.6" width="5.4" height="5.8" fill="#fff"/><ellipse cx="38" cy="11.5" rx="1.5" ry="1.9" fill="none" stroke="#2b7cd3" stroke-width="0.8"/>
</svg>
<div class="t" style="left:803px;top:452.7px;font-size:10.34px;color:#323130;-webkit-text-stroke:0.25px #323130;transform-origin:0 0;transform:scaleX(0.9524)">Send an email for a selected row</div>
<div class="t" style="left:802.6px;top:469px;font-size:9.03px;color:#605e5c;transform-origin:0 0;transform:scaleX(0.9524)">By Microsoft</div>
<div class="a" style="left:776.3px;top:499.1px;width:247.7px;height:44.9px;background:#fff"></div>
<div class="t" style="left:785.3px;top:512.7px;font-size:10.88px;color:#2266e3;transform-origin:0 0;transform:scaleX(0.9524)">Sign Out</div>
<div class="t" style="left:785.3px;top:529.4px;font-size:11.09px;color:#2266e3;transform-origin:0 0;transform:scaleX(0.9524)">Microsoft Power Automate</div>
<svg style="left:911px;top:523.4px" width="14" height="11"><path d="M6.5 2.8 H1.6 V9.2 H11.5 V6.2 M8.6 1.6 H12.3 V5.3 M12.3 1.6 L8.4 5.5" fill="none" stroke="#2266e3" stroke-width="0.9"/></svg>

</body></html>
